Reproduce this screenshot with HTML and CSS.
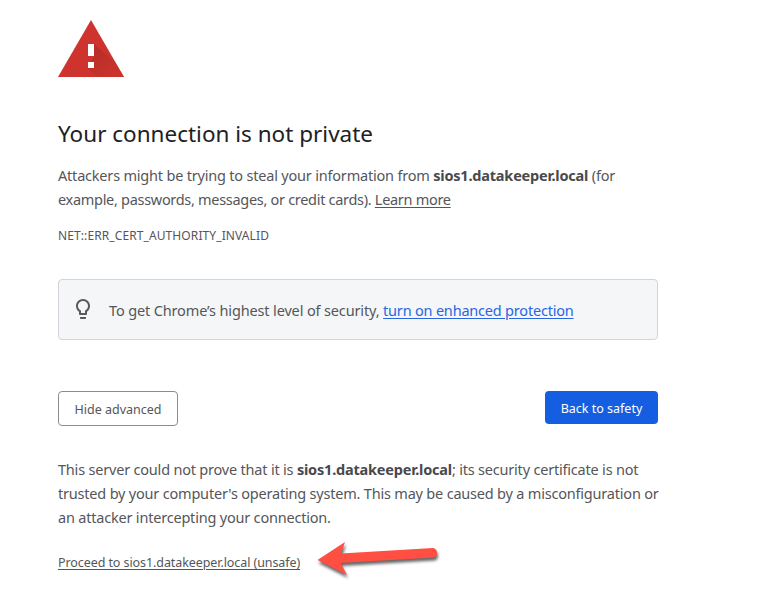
FILE: index.html
```html
<!DOCTYPE html>
<html lang="en">
<head>
    <meta charset="UTF-8">
    <meta name="viewport" content="width=device-width">
    <title>Privacy error</title>
    <link rel="stylesheet" href="styles.css">
</head>
<body>
    <div class="interstitial">
        <svg class="icon" width="66" height="57" viewBox="0 0 66 57">
            <defs>
                <linearGradient id="shade" x1="0" y1="0" x2="1" y2="1">
                    <stop offset="0" stop-color="#a82a26"/>
                    <stop offset="1" stop-color="#cf332d"/>
                </linearGradient>
            </defs>
            <path d="M33 0L66 57H0z" fill="#cf332d"/>
            <path d="M36 24L57 42L66 57H39L30 48L36 36z" fill="url(#shade)" opacity=".7"/>
            <path d="M30 24h6v12h-6zM30 42h6v6h-6z" fill="#fff"/>
        </svg>

        <h1>Your connection is not private</h1>

        <p class="message">Attackers might be trying to steal your information from <strong>sios1.datakeeper.local</strong> (for<br>
            <span class="tight">example, passwords, messages, or credit cards). <a href="#">Learn more</a></span></p>

        <div class="error-code">NET::ERR_CERT_AUTHORITY_INVALID</div>

        <div class="protection">
            <svg class="bulb" width="24" height="24" viewBox="0 0 24 24" fill="#5a5a5c">
                <path d="M9 21c0 .55.45 1 1 1h4c.55 0 1-.45 1-1v-1H9v1zm3-19C8.14 2 5 5.14 5 9c0 2.38 1.19 4.47 3 5.74V17c0 .55.45 1 1 1h6c.55 0 1-.45 1-1v-2.26c1.81-1.27 3-3.36 3-5.74 0-3.86-3.14-7-7-7zm2.85 11.1l-.85.6V16h-4v-2.3l-.85-.6C7.8 12.16 7 10.63 7 9c0-2.76 2.24-5 5-5s5 2.24 5 5c0 1.63-.8 3.16-2.15 4.1z"/>
            </svg>
            <div class="protection-text">To get Chrome’s highest level of security, <a href="#">turn on enhanced protection</a></div>
        </div>

        <div class="buttons">
            <button class="details-button">Hide advanced</button>
            <button class="primary-button">Back to safety</button>
        </div>

        <p class="details">This server could not prove that it is <strong>sios1.datakeeper.local</strong>; its security certificate is not<br>
            trusted by your computer's operating system. This may be caused by a misconfiguration or<br>
            an attacker intercepting your connection.</p>

        <a class="proceed" href="#">Proceed to sios1.datakeeper.local (unsafe)</a>
    </div>

    <svg class="arrow" width="136" height="60" viewBox="0 0 136 60">
        <path d="M7.500 25L35 7L31 18.500L123 13a5 5 0 0 1 1 9.500L30.500 28L37 40z" fill="#ff4f43"/>
    </svg>
</body>
</html>
```
FILE: styles.css
```css
body {
    position: relative;
    min-height: 612px;
    margin: 0;
    background-color: #fff;
    color: #54565a;
    font-family: "Noto Sans", "Open Sans", sans-serif;
    font-size: 14.5px;
    line-height: 24px;
}
.interstitial {
    width: 600px;
    padding: 20px 0 0 58px;
    white-space: nowrap;
}
.icon {
    display: block;
}
h1 {
    margin: 39px 0 11px;
    color: #202124;
    font-size: 22.5px;
    font-weight: 400;
    line-height: 36px;
}
p {
    margin: 0;
    letter-spacing: -0.2px;
}
strong {
    color: #48494c;
}
a {
    color: inherit;
    text-underline-offset: 2px;
}
.tight {
    letter-spacing: -0.3px;
}
.error-code {
    margin-top: 15px;
    font-size: 12px;
    line-height: 20px;
    letter-spacing: 0.1px;
}
.protection {
    display: flex;
    align-items: flex-start;
    box-sizing: border-box;
    height: 61px;
    margin-top: 33px;
    padding: 18px 12px;
    border: 1px solid #d2d4d9;
    border-radius: 4px;
    background-color: #f5f6f8;
}
.bulb {
    margin-top: -1px;
}
.protection-text {
    margin-left: 14px;
    letter-spacing: -0.14px;
}
.protection a {
    color: #2866e4;
    letter-spacing: -0.2px;
}
.buttons {
    display: flex;
    align-items: flex-start;
    justify-content: space-between;
    margin-top: 51px;
}
button {
    box-sizing: border-box;
    padding: 2px 0 0;
    border-radius: 4px;
    font-family: inherit;
    font-size: 12.5px;
}
.details-button {
    width: 120px;
    height: 35px;
    border: 1px solid #898c91;
    background-color: #fff;
    color: #54565a;
}
.primary-button {
    width: 113px;
    height: 33px;
    border: 0;
    background-color: #155ee1;
    color: #fff;
}
.details {
    margin-top: 31px;
}
.proceed {
    display: inline-block;
    margin-top: 22px;
    font-size: 12.5px;
    letter-spacing: -0.08px;
}
/* pointer drawn over the page */
.arrow {
    position: absolute;
    left: 310px;
    top: 535px;
    filter: drop-shadow(1px 3px 1.5px rgba(0, 0, 0, 0.6));
}
```
